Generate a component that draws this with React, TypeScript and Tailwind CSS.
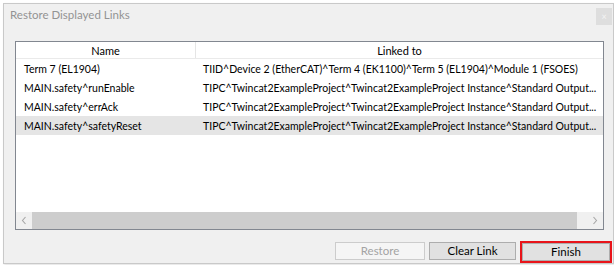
import React from "react"

// ─── Data ─────────────────────────────────────────────────────────────────────

const OUTPUTS = "TIPC^Twincat2ExampleProject^Twincat2ExampleProject Instance^Standard Output..."

const LINKS = [
  {
    name: "Term 7 (EL1904)",
    linked: "TIID^Device 2 (EtherCAT)^Term 4 (EK1100)^Term 5 (EL1904)^Module 1 (FSOES)",
  },
  { name: "MAIN.safety^runEnable", linked: OUTPUTS },
  { name: "MAIN.safety^errAck", linked: OUTPUTS },
  { name: "MAIN.safety^safetyReset", linked: OUTPUTS, selected: true },
]

const FONT = "font-['Lato','Noto_Sans',sans-serif]"

// ─── Bits ─────────────────────────────────────────────────────────────────────

function Chevron({ dir }: { dir: "left" | "right" }) {
  return (
    <svg width="6" height="9" viewBox="0 0 6 9" fill="none">
      <path
        d={dir === "left" ? "M4.5 1 L1.5 4.5 L4.5 8" : "M1.5 1 L4.5 4.5 L1.5 8"}
        stroke="#a6a6a6"
        strokeWidth="1.1"
      />
    </svg>
  )
}

function Button({
  children,
  disabled,
  className = "",
}: {
  children: React.ReactNode
  disabled?: boolean
  className?: string
}) {
  return (
    <button
      type="button"
      disabled={disabled}
      className={
        "flex h-[18px] items-center justify-center border text-[11.5px] leading-none " +
        (disabled
          ? "border-[#cccccc] bg-[#f5f5f5] text-[#a3a3a3] "
          : "border-[#adadad] bg-[#e1e1e1] text-black ") +
        className
      }
    >
      {children}
    </button>
  )
}

// ─── Dialog ───────────────────────────────────────────────────────────────────

export default function App() {
  return (
    <div className={"h-[265px] w-[614px] overflow-hidden bg-white pl-[3px] pt-[3px] " + FONT}>
      <div className="flex h-[261px] w-[611px] flex-col border border-[#c9c9c9] bg-[#f0f0f0] shadow-[1px_1px_2px_rgba(0,0,0,0.12)]">
        {/* Title bar */}
        <div className="flex h-[26px] items-start justify-between">
          <span className="pl-[6px] pt-[3px] text-[11.5px] leading-4 text-[#939393]">
            Restore Displayed Links
          </span>
          <div className="mr-[1px] mt-[4px] flex h-[17px] w-[16px] items-center justify-center bg-[#dedede] text-[9px] leading-none text-[#f4f4f4]">
            ×
          </div>
        </div>

        {/* List view */}
        <div className="ml-[11px] mr-[9px] mt-[11px] flex h-[189px] flex-col border border-[#828790] bg-white">
          {/* Header */}
          <div className="flex h-[17px] shrink-0 border-b border-[#eaeaea] text-[11px] leading-none text-black">
            <div className="flex w-[180px] items-center justify-center border-r border-[#e5e5e5]">
              Name
            </div>
            <div className="flex flex-1 items-center justify-center">Linked to</div>
          </div>

          {/* Rows */}
          <div className="flex flex-1 flex-col">
            {LINKS.map((row) => (
              <div
                key={row.name}
                className={
                  "flex h-[19px] items-center text-[10.5px] leading-4 text-black " +
                  (row.selected ? "bg-[#e5e5e5]" : "")
                }
              >
                <div className="w-[180px] shrink-0 whitespace-nowrap pl-[8px]">{row.name}</div>
                <div className="min-w-0 flex-1 whitespace-nowrap pl-[7px]">{row.linked}</div>
              </div>
            ))}
          </div>

          {/* Horizontal scrollbar */}
          <div className="flex h-[17px] shrink-0 items-stretch bg-[#f0f0f0]">
            <div className="flex w-[16px] items-center justify-center">
              <Chevron dir="left" />
            </div>
            <div className="w-[545px] bg-[#cdcdcd]" />
            <div className="flex-1" />
            <div className="flex w-[17px] items-center justify-center">
              <Chevron dir="right" />
            </div>
          </div>
        </div>

        {/* Buttons */}
        <div className="mr-[1px] mt-[11px] flex items-start justify-end">
          <Button disabled className="mt-[1px] w-[90px]">
            Restore
          </Button>
          <Button className="ml-[4px] mt-[1px] w-[87px]">Clear Link</Button>
          <div className="ml-[4px] border-2 border-[#e8141a] p-0">
            <Button className="h-[17px] w-[88px]">Finish</Button>
          </div>
        </div>
      </div>
    </div>
  )
}
